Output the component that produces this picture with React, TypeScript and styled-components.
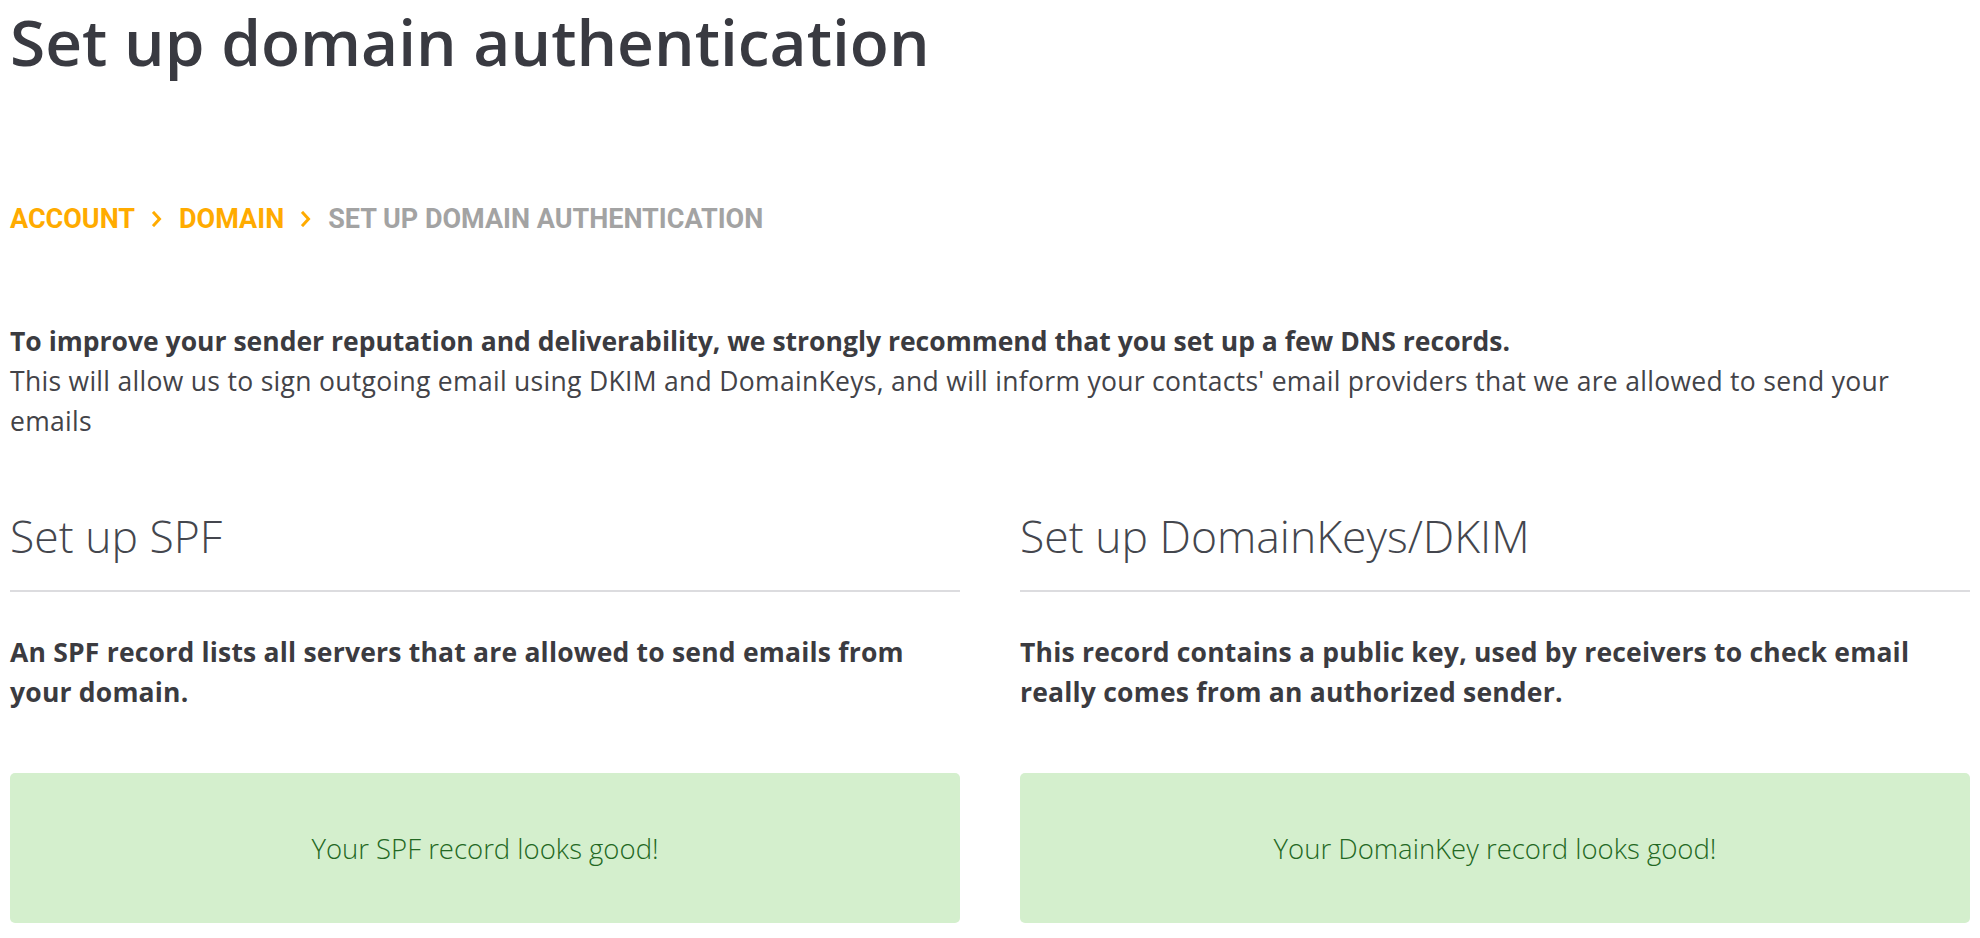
import React from "react";
import styled, { createGlobalStyle } from "styled-components";

const GlobalStyle = createGlobalStyle`
  html, body {
    margin: 0;
    padding: 0;
    background: #ffffff;
  }
  body {
    font-family: "Open Sans", "Noto Sans", sans-serif;
    color: #404045;
  }
  * { box-sizing: border-box; }
`;

const Page = styled.div`
  padding: 0 10px;
  width: 1980px;
`;

const Title = styled.h1`
  margin: 0;
  font-family: "Open Sans", "Noto Sans", sans-serif;
  font-weight: 600;
  font-size: 64px;
  line-height: 84px;
  color: #393a41;
`;

const Breadcrumbs = styled.nav`
  margin-top: 120px;
  display: flex;
  align-items: center;
  height: 30px;
  font-family: Roboto, "Liberation Sans", sans-serif;
  font-weight: 700;
  font-size: 27px;
  line-height: 30px;
  text-transform: uppercase;
`;

const Crumb = styled.a<{ $current?: boolean }>`
  color: ${(p) => (p.$current ? "#a3a3a3" : "#ffab00")};
  text-decoration: none;
  cursor: ${(p) => (p.$current ? "default" : "pointer")};
`;

const Separator = styled.span`
  display: inline-flex;
  align-items: center;
  justify-content: center;
  width: 44px;
  color: #ffab00;
  svg {
    display: block;
  }
`;

const Intro = styled.div`
  margin-top: 87px;
  font-size: 26.5px;
  line-height: 40px;
  letter-spacing: 0.3px;
  color: #434348;
`;

const Strong = styled.strong`
  display: block;
  font-weight: 700;
  letter-spacing: 0;
  color: #3b3b40;
`;

const Columns = styled.div`
  display: grid;
  grid-template-columns: 1fr 1fr;
  column-gap: 60px;
  margin-top: 70px;
`;

const Section = styled.section`
  display: flex;
  flex-direction: column;
`;

const SectionTitle = styled.h2`
  margin: 0;
  font-weight: 300;
  font-size: 44.5px;
  line-height: 50px;
  color: #44464d;
  padding-bottom: 29px;
  border-bottom: 2px solid #dcdcdf;
`;

const Description = styled.p`
  margin: 40px 0 0;
  font-weight: 700;
  font-size: 26.5px;
  line-height: 40px;
  letter-spacing: 0.2px;
  color: #3b3b40;
`;

const SuccessBox = styled.div`
  margin-top: 61px;
  height: 150px;
  border-radius: 5px;
  background: #d4efcd;
  color: #236823;
  display: flex;
  align-items: center;
  justify-content: center;
  font-weight: 300;
  font-size: 27.5px;
`;

const Chevron = () => (
  <svg width="10" height="16" viewBox="0 0 10 16" aria-hidden="true">
    <path d="M2 2 L7.5 8 L2 14" fill="none" stroke="currentColor" strokeWidth="3" strokeLinecap="square" />
  </svg>
);

export default function App() {
  return (
    <>
      <GlobalStyle />
      <Page>
        <Title>Set up domain authentication</Title>
        <Breadcrumbs>
          <Crumb>Account</Crumb>
          <Separator><Chevron /></Separator>
          <Crumb>Domain</Crumb>
          <Separator><Chevron /></Separator>
          <Crumb $current>Set up domain authentication</Crumb>
        </Breadcrumbs>
        <Intro>
          <Strong>
            To improve your sender reputation and deliverability, we strongly recommend that you set up a few DNS records.
          </Strong>
          This will allow us to sign outgoing email using DKIM and DomainKeys, and will inform your contacts' email providers that we are allowed to send your emails
        </Intro>
        <Columns>
          <Section>
            <SectionTitle>Set up SPF</SectionTitle>
            <Description>An SPF record lists all servers that are allowed to send emails from your domain.</Description>
            <SuccessBox>Your SPF record looks good!</SuccessBox>
          </Section>
          <Section>
            <SectionTitle>Set up DomainKeys/DKIM</SectionTitle>
            <Description>This record contains a public key, used by receivers to check email really comes from an authorized sender.</Description>
            <SuccessBox>Your DomainKey record looks good!</SuccessBox>
          </Section>
        </Columns>
      </Page>
    </>
  );
}
